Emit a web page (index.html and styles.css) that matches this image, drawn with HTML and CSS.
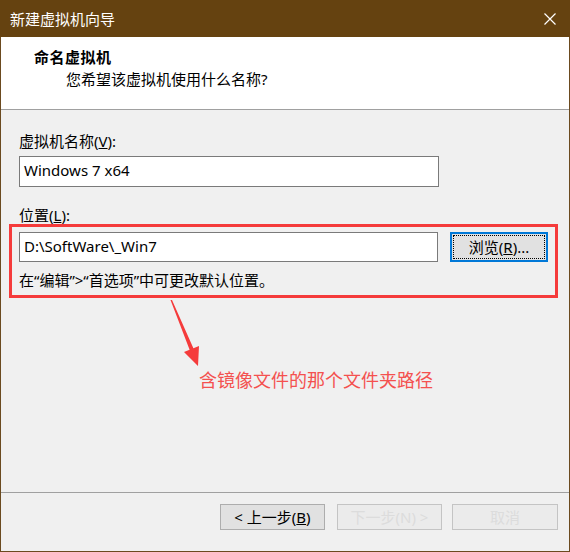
FILE: index.html
```html
<!DOCTYPE html>
<html lang="zh-CN">
<head>
  <meta charset="UTF-8">
  <title>新建虚拟机向导</title>
  <link rel="stylesheet" href="styles.css">
</head>
<body>
  <div class="window">
    <div class="titlebar">
      <span class="title">新建虚拟机向导</span>
      <svg class="close" width="14" height="14" viewBox="0 0 14 14">
        <path d="M1.5 1.5 L12.5 12.5 M12.5 1.5 L1.5 12.5" stroke="#fff" stroke-width="1.2" fill="none"/>
      </svg>
    </div>

    <div class="header">
      <div class="header-title">命名虚拟机</div>
      <div class="header-sub">您希望该虚拟机使用什么名称?</div>
    </div>

    <div class="content">
      <label class="field-label">虚拟机名称(<u>V</u>):</label>
      <div class="textbox name-box">Windows 7 x64</div>

      <label class="field-label loc-label">位置(<u>L</u>):</label>
      <div class="highlight">
        <div class="row">
          <div class="textbox path-box">D:\SoftWare\_Win7</div>
          <button class="btn browse">浏览(<u>R</u>)...</button>
        </div>
        <div class="hint">在“编辑”&gt;“首选项”中可更改默认位置。</div>
      </div>

      <svg class="arrow" width="45" height="75" viewBox="160 295 45 75">
        <polygon points="169.5,300 171,300 192.4,348.2 198,346 197,366 183,352 188.6,349.8" fill="#f53b3b"/>
      </svg>
      <div class="note">含镜像文件的那个文件夹路径</div>
    </div>

    <div class="footer">
      <button class="btn">&lt; 上一步(<u>B</u>)</button>
      <button class="btn disabled">下一步(N) &gt;</button>
      <button class="btn disabled last">取消</button>
    </div>
  </div>
</body>
</html>
```

FILE: styles.css
```css
body { margin: 0; font-family: "Noto Sans", "Noto Sans CJK SC", sans-serif; font-size: 15px; color: #000; }
.window { position: relative; width: 568px; height: 551px; border: 1px solid #6b4a1f; border-top: none; background: #f0f0f0; display: flex; flex-direction: column; }
.titlebar { height: 37px; background: #654210; display: flex; align-items: center; justify-content: space-between; padding: 0 13px 0 10px; margin: 0 -1px; }
.title { color: #fff; font-size: 15px; line-height: 20px; }
.close { display: block; }
.header { background: #fff; border-bottom: 1px solid #a0a0a0; padding-top: 10px; box-sizing: border-box; height: 73px; }
.header-title { font-weight: bold; margin-left: 33px; line-height: 20px; letter-spacing: 0.5px; }
.header-sub { margin-left: 65px; margin-top: 2px; line-height: 20px; }
.content { flex: 1; padding: 21px 0 0 18px; }
.field-label { display: block; line-height: 20px; }
.textbox { box-sizing: border-box; height: 31px; border: 1px solid #7a7a7a; background: #fff; padding: 0 4px; line-height: 26px; }
.name-box { width: 420px; margin-top: 5px; }
.loc-label { margin-top: 19px; line-height: 18px; }
.highlight { width: 549px; box-sizing: border-box; margin-left: -10px; border: 3px solid #f53b3b; padding: 5px 7px 5px 7px; }
.row { display: flex; align-items: center; gap: 12px; }
.path-box { width: 419px; height: 30px; }
.btn { font-family: inherit; font-size: 15px; color: #000; background: #e1e1e1; border: 1px solid #adadad; height: 26px; width: 105px; padding: 0; line-height: 22px; }
.browse { width: 98px; height: 30px; border: 2px solid #0078d7; outline: 1px dotted #000; outline-offset: -4px; }
.hint { margin-top: 8px; line-height: 20px; }
.arrow { position: absolute; left: 160px; top: 295px; }
.note { position: absolute; left: 198px; top: 368px; color: #f4514f; font-size: 18px; line-height: 24px; }
.footer { height: 47px; border-top: 1px solid #a0a0a0; display: flex; justify-content: flex-end; align-items: flex-start; padding: 11px 11px 0 0; gap: 12px; }
.btn.disabled { background: #ebebeb; border-color: #c4c4c4; color: #dcdcdc; }
.btn.last { width: 106px; margin-left: -2px; }
```
